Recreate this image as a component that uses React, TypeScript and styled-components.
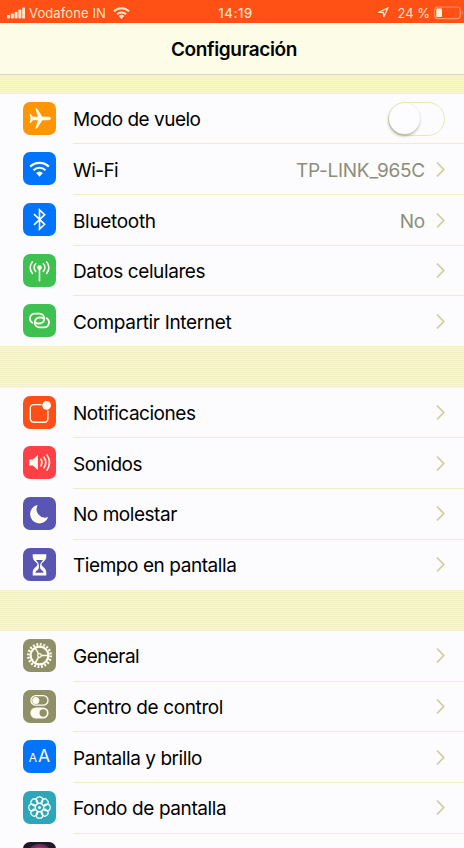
import React from "react";
import styled, { createGlobalStyle, css } from "styled-components";

const Global = createGlobalStyle`
  * { box-sizing: border-box; }
  html, body { margin: 0; padding: 0; overflow: hidden; background: #fcfcff; }
  body { font-family: Inter, "Liberation Sans", sans-serif; }
`;

const weave = (across: string, down: string, step: number) => `
  repeating-linear-gradient(90deg, ${across} 0 1px, transparent 1px ${step}px),
  repeating-linear-gradient(180deg, ${down} 0 1px, transparent 1px ${step}px)
`;

const Screen = styled.div`
  width: 464px;
  height: 848px;
  overflow: hidden;
  display: flex;
  flex-direction: column;
  background: #fcfcff;
  color: #000;
`;

const StatusBar = styled.header`
  height: 23px;
  flex: none;
  display: grid;
  grid-template-columns: 1fr auto 1fr;
  align-items: center;
  padding: 2px 0 0 7px;
  color: #ffe6c8;
  font-size: 13px;
  background: #ff5016;
`;

const StatusSide = styled.div<{ $end?: boolean }>`
  display: flex;
  align-items: center;
  justify-content: ${(p) => (p.$end ? "flex-end" : "flex-start")};
`;

const Carrier = styled.span`
  margin: 0 7px 0 4px;
  letter-spacing: 0.1px;
`;

const Clock = styled.span`
  font-weight: 500;
  font-size: 13px;
  letter-spacing: 0.6px;
`;

const Percent = styled.span`
  margin: 0 4px 0 8px;
`;

const TitleBar = styled.div`
  height: 52px;
  flex: none;
  display: flex;
  align-items: center;
  justify-content: center;
  padding: 1px 0 0 4px;
  border-bottom: 1px solid #d8d8cc;
  background: ${weave("rgba(255, 255, 130, 0.12)", "rgba(225, 225, 255, 0.16)", 2)}, #fdfdf3;
`;

const Title = styled.h1`
  margin: 0;
  font-size: 19px;
  font-weight: 600;
  letter-spacing: -0.36px;
`;

const Gap = styled.div<{ $h: number }>`
  height: ${(p) => p.$h}px;
  flex: none;
  background: ${weave("rgba(255, 255, 90, 0.16)", "rgba(224, 224, 236, 0.35)", 2)}, #f7f6d9;
`;

const Group = styled.section`
  flex: none;
  display: flex;
  flex-direction: column;
`;

const Row = styled.div<{ $h: number }>`
  height: ${(p) => p.$h}px;
  display: flex;
  padding-left: 23px;
`;

const Tile = styled.div<{ $color: string }>`
  width: 33px;
  height: 33px;
  margin: 8px 17px 0 0;
  flex: none;
  border-radius: 7px;
  overflow: hidden;
  background: ${(p) => p.$color};
  svg { display: block; width: 33px; height: 33px; }
`;

const RowBody = styled.div<{ $line: boolean }>`
  flex: 1;
  display: flex;
  align-items: flex-start;
  padding: 0 19px 0 0;
  ${(p) =>
    p.$line &&
    css`
      background: linear-gradient(#eeedc6, #eeedc6) 0 100% / 100% 1px no-repeat;
    `}
`;

const RowContent = styled.div<{ $low: boolean }>`
  flex: 1;
  height: ${(p) => (p.$low ? 52 : 51)}px;
  display: flex;
  align-items: center;
`;

const Label = styled.span<{ $track: number }>`
  font-size: 19px;
  letter-spacing: ${(p) => p.$track}px;
  white-space: nowrap;
`;

const Value = styled.span<{ $track: number }>`
  margin-left: auto;
  margin-right: 11px;
  font-size: 19px;
  letter-spacing: ${(p) => p.$track}px;
  color: #8e8e78;
`;

const ChevronBox = styled.svg<{ $push: boolean }>`
  width: 9px;
  height: 17px;
  margin-top: -2px;
  ${(p) => p.$push && "margin-left: auto;"}
  fill: none;
  stroke: #d0cf9c;
  stroke-width: 1.8;
`;

const Switch = styled.div`
  margin-left: auto;
  width: 57px;
  height: 34px;
  margin-top: -2px;
  border-radius: 17px;
  border: 1.5px solid #e8e8b4;
  display: flex;
  align-items: center;
`;

const Knob = styled.div`
  width: 31px;
  height: 31px;
  border-radius: 50%;
  background: #fdfdff;
  box-shadow: -0.5px 2px 3px rgba(90, 90, 50, 0.42), 0 0 1px rgba(120, 120, 70, 0.2);
`;

const white = "#fffef0";

const Plane = () => (
  <svg viewBox="0 0 33 33">
    <path fill={white} d="M28 16.500c0-1.200-1.600-1.800-3.200-1.800h-5.400L14 6.500h-1.700l2.700 8.200h-5.100l-2.300-2.600H6.600l1 4.400-1 4.400h1l2.300-2.600H15l-2.700 8.200H14l5.400-8.200h5.400c1.600 0 3.200-.6 3.200-1.800z" />
  </svg>
);

const WifiIcon = () => (
  <svg viewBox="0 0 33 33" fill="none" stroke={white} strokeWidth="2.200">
    <path d="M7.200 14.600a13.300 13.300 0 0 1 18.600 0" />
    <path d="M10.500 18.200a8.600 8.600 0 0 1 12 0" />
    <path fill={white} stroke="none" d="M13.100 21.100a5 5 0 0 1 6.800 0L16.500 24.700z" />
  </svg>
);

const BluetoothIcon = () => (
  <svg viewBox="0 0 33 33" fill="none" stroke={white} strokeWidth="1.600">
    <path d="M11 11.200L21.700 21.300 16.500 26.200V6.800L21.700 11.700 11 21.800" />
  </svg>
);

const CellIcon = () => (
  <svg viewBox="0 0 33 33" fill="none" stroke={white} strokeWidth="1.600" strokeLinecap="round">
    <circle cx="16.500" cy="13.600" r="2.300" fill={white} stroke="none" />
    <path d="M16.500 14v12.800" />
    <path d="M12.700 9.800a5.300 5.300 0 0 0 0 7.600M20.300 9.800a5.300 5.300 0 0 1 0 7.600" />
    <path d="M9.300 7.900a8.700 8.700 0 0 0 0 11.400M23.700 7.900a8.700 8.700 0 0 1 0 11.400" />
  </svg>
);

const LinkIcon = () => (
  <svg viewBox="0 0 33 33" fill="none" stroke={white} strokeWidth="1.800" strokeLinecap="round">
    <path d="M9.400 18.800a4.900 4.900 0 0 1 2.400-9.100h4.600a4.900 4.900 0 0 1 0 9.800h-1.600a2.400 2.400 0 0 1-1.800-.8" />
    <path d="M23.600 14.200a4.900 4.900 0 0 1-2.400 9.100h-4.600a4.900 4.900 0 0 1 0-9.800h1.600a2.400 2.400 0 0 1 1.800.8" />
  </svg>
);

const NotifyIcon = () => (
  <svg viewBox="0 0 33 33">
    <path fill="none" stroke={white} strokeWidth="1.400" d="M18.600 8.600h-7.800a3.500 3.500 0 0 0-3.500 3.500v10.600a3.500 3.500 0 0 0 3.500 3.500h10.600a3.500 3.500 0 0 0 3.500-3.500V14.600" />
    <circle cx="23.600" cy="9.400" r="4.300" fill={white} />
  </svg>
);

const SoundIcon = () => (
  <svg viewBox="0 0 33 33" fill="none" stroke={white} strokeWidth="1.500" strokeLinecap="round">
    <path fill={white} stroke="none" d="M6.200 13.400h3.700l5-4.300v14.800l-5-4.300H6.200z" />
    <path d="M18 13.200c1.100 1.900 1.100 4.700 0 6.600M21 11.100c2.100 3.200 2.100 7.600 0 10.800M24 8.900c3 4.600 3 10.600 0 15.200" />
  </svg>
);

const MoonIcon = () => (
  <svg viewBox="0 0 33 33">
    <path fill={white} d="M14.700 8a9.300 9.300 0 1 0 10.500 12.100 8.500 8.500 0 0 1-10.500-12.100z" />
  </svg>
);

const HourglassIcon = () => (
  <svg viewBox="0 0 33 33">
    <path fill={white} d="M9.700 6.200h13.600v2.300c0 4.600-4.800 5.800-4.800 8s4.800 3.400 4.800 8v3H9.700v-3c0-4.600 4.800-5.800 4.800-8s-4.800-3.400-4.800-8z" />
    <path fill="#5856b2" d="M13 12h7c-1.200 1.800-2.600 2.800-2.900 4.900v3c.3 1.700 3 2.400 3.600 4.800h-8.400c.6-2.400 3.300-3.100 3.600-4.800v-3c-.3-2.100-1.700-3.100-2.900-4.900z" />
  </svg>
);

const GearIcon = () => (
  <svg viewBox="0 0 33 33" fill="none" stroke={white}>
    <circle cx="16.500" cy="16.500" r="11.200" strokeWidth="2.600" strokeDasharray="1.860 1.658" />
    <circle cx="16.500" cy="16.500" r="8.900" strokeWidth="2.200" />
    <circle cx="16.500" cy="16.500" r="1.800" strokeWidth="1.300" />
    <path strokeWidth="1.500" d="M18.300 16.500h6.500M15.600 14.900l-3.400-6M15.600 18.100l-3.400 6" />
  </svg>
);

const ControlIcon = () => (
  <svg viewBox="0 0 33 33">
    <rect x="8" y="5.600" width="17" height="9.600" rx="4.800" fill="none" stroke={white} strokeWidth="1.300" />
    <circle cx="12.800" cy="10.400" r="3.500" fill={white} />
    <rect x="7.400" y="17.500" width="18.200" height="11" rx="5.500" fill={white} />
    <circle cx="20.200" cy="23" r="3.700" fill="#909068" />
  </svg>
);

const Letters = styled.div`
  height: 33px;
  display: flex;
  align-items: baseline;
  justify-content: center;
  gap: 1px;
  padding-top: 3px;
  color: ${white};
  line-height: 25px;
`;

const Letter = styled.span<{ $size: number }>`
  font-size: ${(p) => p.$size}px;
`;

const BrightnessIcon = () => (
  <Letters>
    <Letter $size={12}>A</Letter>
    <Letter $size={17.5}>A</Letter>
  </Letters>
);

const FlowerIcon = () => (
  <svg viewBox="0 0 33 33" fill="none" stroke={white} strokeWidth="1.250">
    {Array.from({ length: 8 }, (_, i) => (
      <circle key={i} cx="16.500" cy="9.100" r="3.300" transform={`rotate(${i * 45} 16.500 16.500)`} />
    ))}
    <circle cx="16.500" cy="16.500" r="4.200" />
    <circle cx="16.500" cy="16.500" r="1.500" fill={white} stroke="none" />
  </svg>
);

const SiriIcon = () => (
  <svg viewBox="0 0 33 33">
    <circle cx="16.500" cy="15.500" r="13.500" fill="#6e2c66" />
    <circle cx="16.500" cy="15.500" r="11" fill="#a8365a" />
  </svg>
);

const Chevron = ({ push }: { push: boolean }) => (
  <ChevronBox viewBox="0 0 9 17" $push={push}>
    <path d="M1 1.500l6.700 7L1 15.500" />
  </ChevronBox>
);

type Item = {
  label: string;
  icon: () => React.ReactElement;
  color: string;
  h: number;
  low?: boolean;
  track?: number;
  value?: string;
  toggle?: boolean;
};

const groups: Item[][] = [
  [
    { label: "Modo de vuelo", icon: Plane, color: "#ff9404", h: 50, track: -0.5, toggle: true },
    { label: "Wi-Fi", icon: WifiIcon, color: "#0074fb", h: 51, low: true, track: -0.55, value: "TP-LINK_965C" },
    { label: "Bluetooth", icon: BluetoothIcon, color: "#0074f8", h: 51, low: true, track: -0.32, value: "No" },
    { label: "Datos celulares", icon: CellIcon, color: "#3fc152", h: 50, track: -0.4 },
    { label: "Compartir Internet", icon: LinkIcon, color: "#3fc152", h: 50, low: true, track: -0.35 },
  ],
  [
    { label: "Notificaciones", icon: NotifyIcon, color: "#ff4f18", h: 50, track: -0.47 },
    { label: "Sonidos", icon: SoundIcon, color: "#ff4046", h: 51, low: true, track: -0.5 },
    { label: "No molestar", icon: MoonIcon, color: "#5856b2", h: 51, track: -0.46 },
    { label: "Tiempo en pantalla", icon: HourglassIcon, color: "#5856b2", h: 50, track: -0.43 },
  ],
  [
    { label: "General", icon: GearIcon, color: "#909068", h: 51, track: -0.55 },
    { label: "Centro de control", icon: ControlIcon, color: "#909068", h: 50, track: -0.38 },
    { label: "Pantalla y brillo", icon: BrightnessIcon, color: "#0074fb", h: 51, low: true, track: -0.44 },
    { label: "Fondo de pantalla", icon: FlowerIcon, color: "#2ea6ba", h: 51, track: -0.4 },
    { label: "", icon: SiriIcon, color: "#1e1a22", h: 51 },
  ],
];

const ItemGroup = ({ items }: { items: Item[] }) => (
  <Group>
    {items.map((item, i) => (
      <Row key={i} $h={item.h}>
        <Tile $color={item.color}>
          <item.icon />
        </Tile>
        <RowBody $line={i < items.length - 1}>
          <RowContent $low={!!item.low}>
            <Label $track={item.track ?? -0.4}>{item.label}</Label>
            {item.value && <Value $track={-0.24}>{item.value}</Value>}
            {item.toggle ? (
              <Switch>
                <Knob />
              </Switch>
            ) : (
              item.label && <Chevron push={!item.value} />
            )}
          </RowContent>
        </RowBody>
      </Row>
    ))}
  </Group>
);

const App = () => (
  <>
    <Global />
    <Screen>
      <StatusBar>
        <StatusSide>
          <svg width="18" height="12" viewBox="0 0 18 12" fill="currentColor">
            <rect x="0" y="8" width="3" height="3.500" rx=".8" />
            <rect x="3.800" y="6.500" width="3" height="5" rx=".8" />
            <rect x="7.600" y="4.700" width="3" height="6.800" rx=".8" />
            <rect x="11.400" y="2.500" width="3" height="9" rx=".8" />
            <rect x="15.200" y="0.500" width="2.800" height="11" rx=".8" />
          </svg>
          <Carrier>Vodafone IN</Carrier>
          <svg width="17" height="12" viewBox="0 0 17 12" fill="none" stroke="currentColor" strokeWidth="2">
            <path d="M1 4.300a10.600 10.600 0 0 1 15 0M4 7.300a6.400 6.400 0 0 1 9 0" />
            <path fill="currentColor" stroke="none" d="M5.800 9.100a3.900 3.900 0 0 1 5.400 0L8.500 11.900z" />
          </svg>
        </StatusSide>
        <Clock>14:19</Clock>
        <StatusSide $end>
          <svg width="11" height="11" viewBox="0 0 11 11" fill="none" stroke="currentColor" strokeWidth="1.300">
            <path d="M1 5.200L9.800 1 5.700 9.900 5.400 5.500z" />
          </svg>
          <Percent>24 %</Percent>
          <svg width="30" height="14" viewBox="0 0 30 14" fill="none">
            <rect x=".7" y="1" width="25.500" height="11.600" rx="3" stroke="#ff9470" strokeWidth="1.200" />
            <rect x="2.300" y="2.600" width="5.700" height="8.400" rx="1" fill="#fff6d0" />
            <path d="M27.800 5v3.800c1.300-.5 1.300-3.300 0-3.800z" fill="#ff9470" />
          </svg>
        </StatusSide>
      </StatusBar>
      <TitleBar>
        <Title>Configuración</Title>
      </TitleBar>
      <Gap $h={19} />
      <ItemGroup items={groups[0]} />
      <Gap $h={42} />
      <ItemGroup items={groups[1]} />
      <Gap $h={41} />
      <ItemGroup items={groups[2]} />
    </Screen>
  </>
);

export default App;
